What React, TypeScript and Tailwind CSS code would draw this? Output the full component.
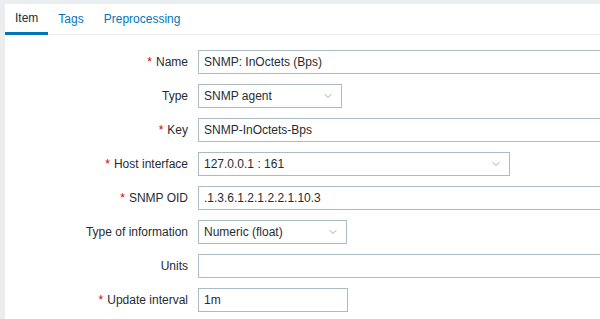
import { ChevronDown } from 'lucide-react';

type Row = {
  label: string;
  required?: boolean;
  value: string;
  kind: 'input' | 'select';
  width: string;
};

const rows: Row[] = [
  { label: 'Name', required: true, value: 'SNMP: InOctets (Bps)', kind: 'input', width: 'w-[420px]' },
  { label: 'Type', value: 'SNMP agent', kind: 'select', width: 'w-[144px]' },
  { label: 'Key', required: true, value: 'SNMP-InOctets-Bps', kind: 'input', width: 'w-[420px]' },
  { label: 'Host interface', required: true, value: '127.0.0.1 : 161', kind: 'select', width: 'w-[312px]' },
  { label: 'SNMP OID', required: true, value: '.1.3.6.1.2.1.2.2.1.10.3', kind: 'input', width: 'w-[420px]' },
  { label: 'Type of information', value: 'Numeric (float)', kind: 'select', width: 'w-[149px]' },
  { label: 'Units', value: '', kind: 'input', width: 'w-[420px]' },
  { label: 'Update interval', required: true, value: '1m', kind: 'input', width: 'w-[150px]' },
];

function Field({ row }: { row: Row }) {
  return (
    <div className="flex items-center h-[24px]">
      <div className="w-[193px] shrink-0 pr-[10px] text-right text-[#1f2c33]">
        {row.required && <span className="text-[#d40000] mr-[4px]">*</span>}
        {row.label}
      </div>
      <div
        className={`${row.width} shrink-0 h-[24px] border border-[#acbbc2] bg-white flex items-center pl-[5px] pr-[7px] text-[#1f2c33]`}
      >
        <span className="flex-1 whitespace-nowrap">{row.value}</span>
        {row.kind === 'select' && <ChevronDown size={12} strokeWidth={1.5} className="text-[#768d99]" />}
      </div>
    </div>
  );
}

export default function App() {
  return (
    <div
      className="w-[600px] h-[319px] bg-[#ebeef0] pt-[4px] pl-[5px] overflow-hidden text-[12px]"
      style={{ fontFamily: '"Liberation Sans", Arial, sans-serif' }}
    >
      <div className="bg-white h-full">
        <div className="flex border-b border-[#ebeef0] h-[31px]">
          <div className="px-[10px] flex items-center text-[#1f2c33] border-b-[3px] border-[#0275b8] -mb-px">Item</div>
          <div className="px-[10px] flex items-center text-[#0275b8]">Tags</div>
          <div className="px-[10px] flex items-center text-[#0275b8]">Preprocessing</div>
        </div>
        <div className="pt-[15px] flex flex-col gap-[10px]">
          {rows.map((r) => (
            <Field key={r.label} row={r} />
          ))}
        </div>
      </div>
    </div>
  );
}
